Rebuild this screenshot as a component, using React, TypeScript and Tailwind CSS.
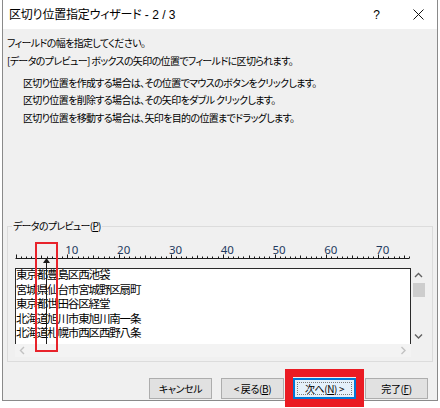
import React from 'react';

const TICK_ORIGIN = 1.5;
const TICK_UNIT = 5.18;
const TICKS = Array.from({ length: 77 }, (_, k) => k);
const LABELS = [10, 20, 30, 40, 50, 60, 70];

const ROWS = [
  '東京都豊島区西池袋',
  '宮城県仙台市宮城野区扇町',
  '東京都世田谷区経堂',
  '北海道旭川市東旭川南一条',
  '北海道札幌市西区西野八条',
];

const Ruler = () => (
  <svg width="400" height="28" viewBox="0 0 400 28" className="block">
    <line x1={TICK_ORIGIN} y1="18.5" x2={TICK_ORIGIN + TICK_UNIT * 76} y2="18.5" stroke="#1a1a1a" strokeWidth="1" />
    {TICKS.map((k) => {
      const x = Math.round(TICK_ORIGIN + TICK_UNIT * k) + 0.5;
      const h = k % 10 === 0 ? 4 : k % 5 === 0 ? 3 : 2;
      return <line key={k} x1={x} y1={18.5 - h} x2={x} y2="18.5" stroke="#1a1a1a" strokeWidth="1" />;
    })}
    {LABELS.map((n) => (
      <text
        key={n}
        x={TICK_ORIGIN + TICK_UNIT * n - 2}
        y="14"
        fontSize="11.5"
        fill="#1f3a5f"
        fontFamily="'Noto Sans', 'Liberation Sans', sans-serif"
      >
        {n}
      </text>
    ))}
  </svg>
);

const Chevron = ({ dir, color }: { dir: 'up' | 'down' | 'left' | 'right'; color: string }) => {
  const d = {
    up: 'M1 5 L4.5 1.5 L8 5',
    down: 'M1 1.5 L4.5 5 L8 1.5',
    left: 'M5 1 L1.5 4.5 L5 8',
    right: 'M1.5 1 L5 4.5 L1.5 8',
  }[dir];
  const vertical = dir === 'up' || dir === 'down';
  return (
    <svg width={vertical ? 9 : 7} height={vertical ? 7 : 9} viewBox={vertical ? '0 0 9 7' : '0 0 7 9'} className="block">
      <path d={d} fill="none" stroke={color} strokeWidth="1.4" />
    </svg>
  );
};

const WizardButton = ({ children, focused }: { children: React.ReactNode; focused?: boolean }) => (
  <div className="relative">
    <button
      className={
        focused
          ? 'relative w-[63px] h-[21px] bg-[#e5f1fb] border border-[#0078d7] shadow-[inset_0_0_0_1px_#0078d7] text-[10px] tracking-[-0.4px] leading-none flex items-center justify-center [font-feature-settings:\'palt\']'
          : 'w-[63px] h-[21px] bg-[#e1e1e1] border border-[#adadad] text-[10px] tracking-[-0.4px] leading-none flex items-center justify-center [font-feature-settings:\'palt\']'
      }
    >
      {focused && <span className="absolute inset-[3px] border border-dotted border-[#7a7a7a]" />}
      <span className="relative">{children}</span>
    </button>
    {focused && <span className="absolute -left-[8px] -right-[8px] -top-[9px] -bottom-[8px] border-[8px] border-[#ea1b23] pointer-events-none" />}
  </div>
);

export default function App() {
  return (
    <div className="relative w-[440px] h-[408px] bg-white overflow-hidden font-['Noto_Sans_CJK_JP','Noto_Sans',sans-serif] text-black">
      <div className="ml-[2px] w-[436px] h-[401px] border-x border-b border-[#8a8a8a] flex flex-col">
        {/* title bar */}
        <div className="h-[29px] bg-white flex items-center pl-[6px] shrink-0">
          <span className="text-[12px] [font-feature-settings:'palt'] tracking-[-0.2px] whitespace-pre">
            区切り位置指定ウィザード
            <span className="font-['Liberation_Sans',sans-serif] tracking-normal"> - 2 / 3</span>
          </span>
          <span className="ml-auto mr-[33px] text-[12px] font-['Liberation_Sans',sans-serif]">?</span>
          <svg width="11" height="11" viewBox="0 0 11 11" className="mr-[13px]">
            <path d="M0.5 0.5 L10.5 10.5 M10.5 0.5 L0.5 10.5" stroke="#111" strokeWidth="1" />
          </svg>
        </div>

        {/* body */}
        <div className="flex-1 bg-[#f0f0f0] px-[4px] flex flex-col">
          <div className="h-[197px] pt-[5px] text-[10px] [font-feature-settings:'palt'] tracking-[-0.65px]">
            <p className="leading-[18px]">フィールドの幅を指定してください。</p>
            <p className="leading-[18px]">[データのプレビュー] ボックスの矢印の位置でフィールドに区切られます。</p>
            <div className="mt-[3.5px] pl-[16px] leading-[17.5px]">
              <p>区切り位置を作成する場合は、その位置でマウスのボタンをクリックします。</p>
              <p>区切り位置を削除する場合は、その矢印をダブル クリックします。</p>
              <p>区切り位置を移動する場合は、矢印を目的の位置までドラッグします。</p>
            </div>
          </div>

          {/* preview group */}
          <div className="relative w-[426px] h-[136px] border border-[#dcdcdc] shrink-0">
            <span className="absolute -top-[9px] left-[4px] bg-[#f0f0f0] px-[1px] text-[10px] leading-[16px] [font-feature-settings:'palt'] tracking-[-0.7px]">
              データのプレビュー(<span className="underline">P</span>)
            </span>
            <div className="mt-[13px] ml-[6px]">
              <Ruler />
            </div>
            <div className="ml-[7px] flex">
              <div className="w-[396px] h-[76px] bg-white border-l border-t border-r border-[#2a2a2a]">
                <div className="-mt-[2px] text-[11.5px] tracking-[-1.14px] leading-[14.5px] whitespace-nowrap">
                  {ROWS.map((r) => (
                    <div key={r}>{r}</div>
                  ))}
                </div>
              </div>
              <div className="w-[15px] h-[76px] flex flex-col items-center">
                <div className="mt-[4px]">
                  <Chevron dir="up" color="#606060" />
                </div>
                <div className="mt-[4px] w-[12px] h-[14px] bg-[#cdcdcd]" />
                <div className="mt-auto mb-[4px]">
                  <Chevron dir="down" color="#606060" />
                </div>
              </div>
            </div>
            <div className="ml-[7px] w-[396px] h-[13px] bg-[#f3f3f3] flex items-center justify-between px-[4px]">
              <Chevron dir="left" color="#c2c2c2" />
              <Chevron dir="right" color="#c2c2c2" />
            </div>
          </div>

          {/* buttons */}
          <div className="mt-[16px] pr-[5px] flex justify-end gap-[9px]">
            <WizardButton>キャンセル</WizardButton>
            <WizardButton>
              &lt; 戻る(<span className="underline">B</span>)
            </WizardButton>
            <WizardButton focused>
              次へ(<span className="underline">N</span>) &gt;
            </WizardButton>
            <WizardButton>
              完了(<span className="underline">F</span>)
            </WizardButton>
          </div>
        </div>
      </div>

      {/* column break marker */}
      <div className="absolute left-[45.5px] top-[262px] w-[1px] h-[82px] bg-[#1a1a1a]" />
      <svg width="7" height="5" viewBox="0 0 7 5" className="absolute left-[42.5px] top-[258px]">
        <path d="M3.5 0 L7 5 L0 5 Z" fill="#1a1a1a" />
      </svg>
      {/* annotation */}
      <div className="absolute left-[35px] top-[242px] w-[23px] h-[110px] border-2 border-[#e8232b]" />
    </div>
  );
}
